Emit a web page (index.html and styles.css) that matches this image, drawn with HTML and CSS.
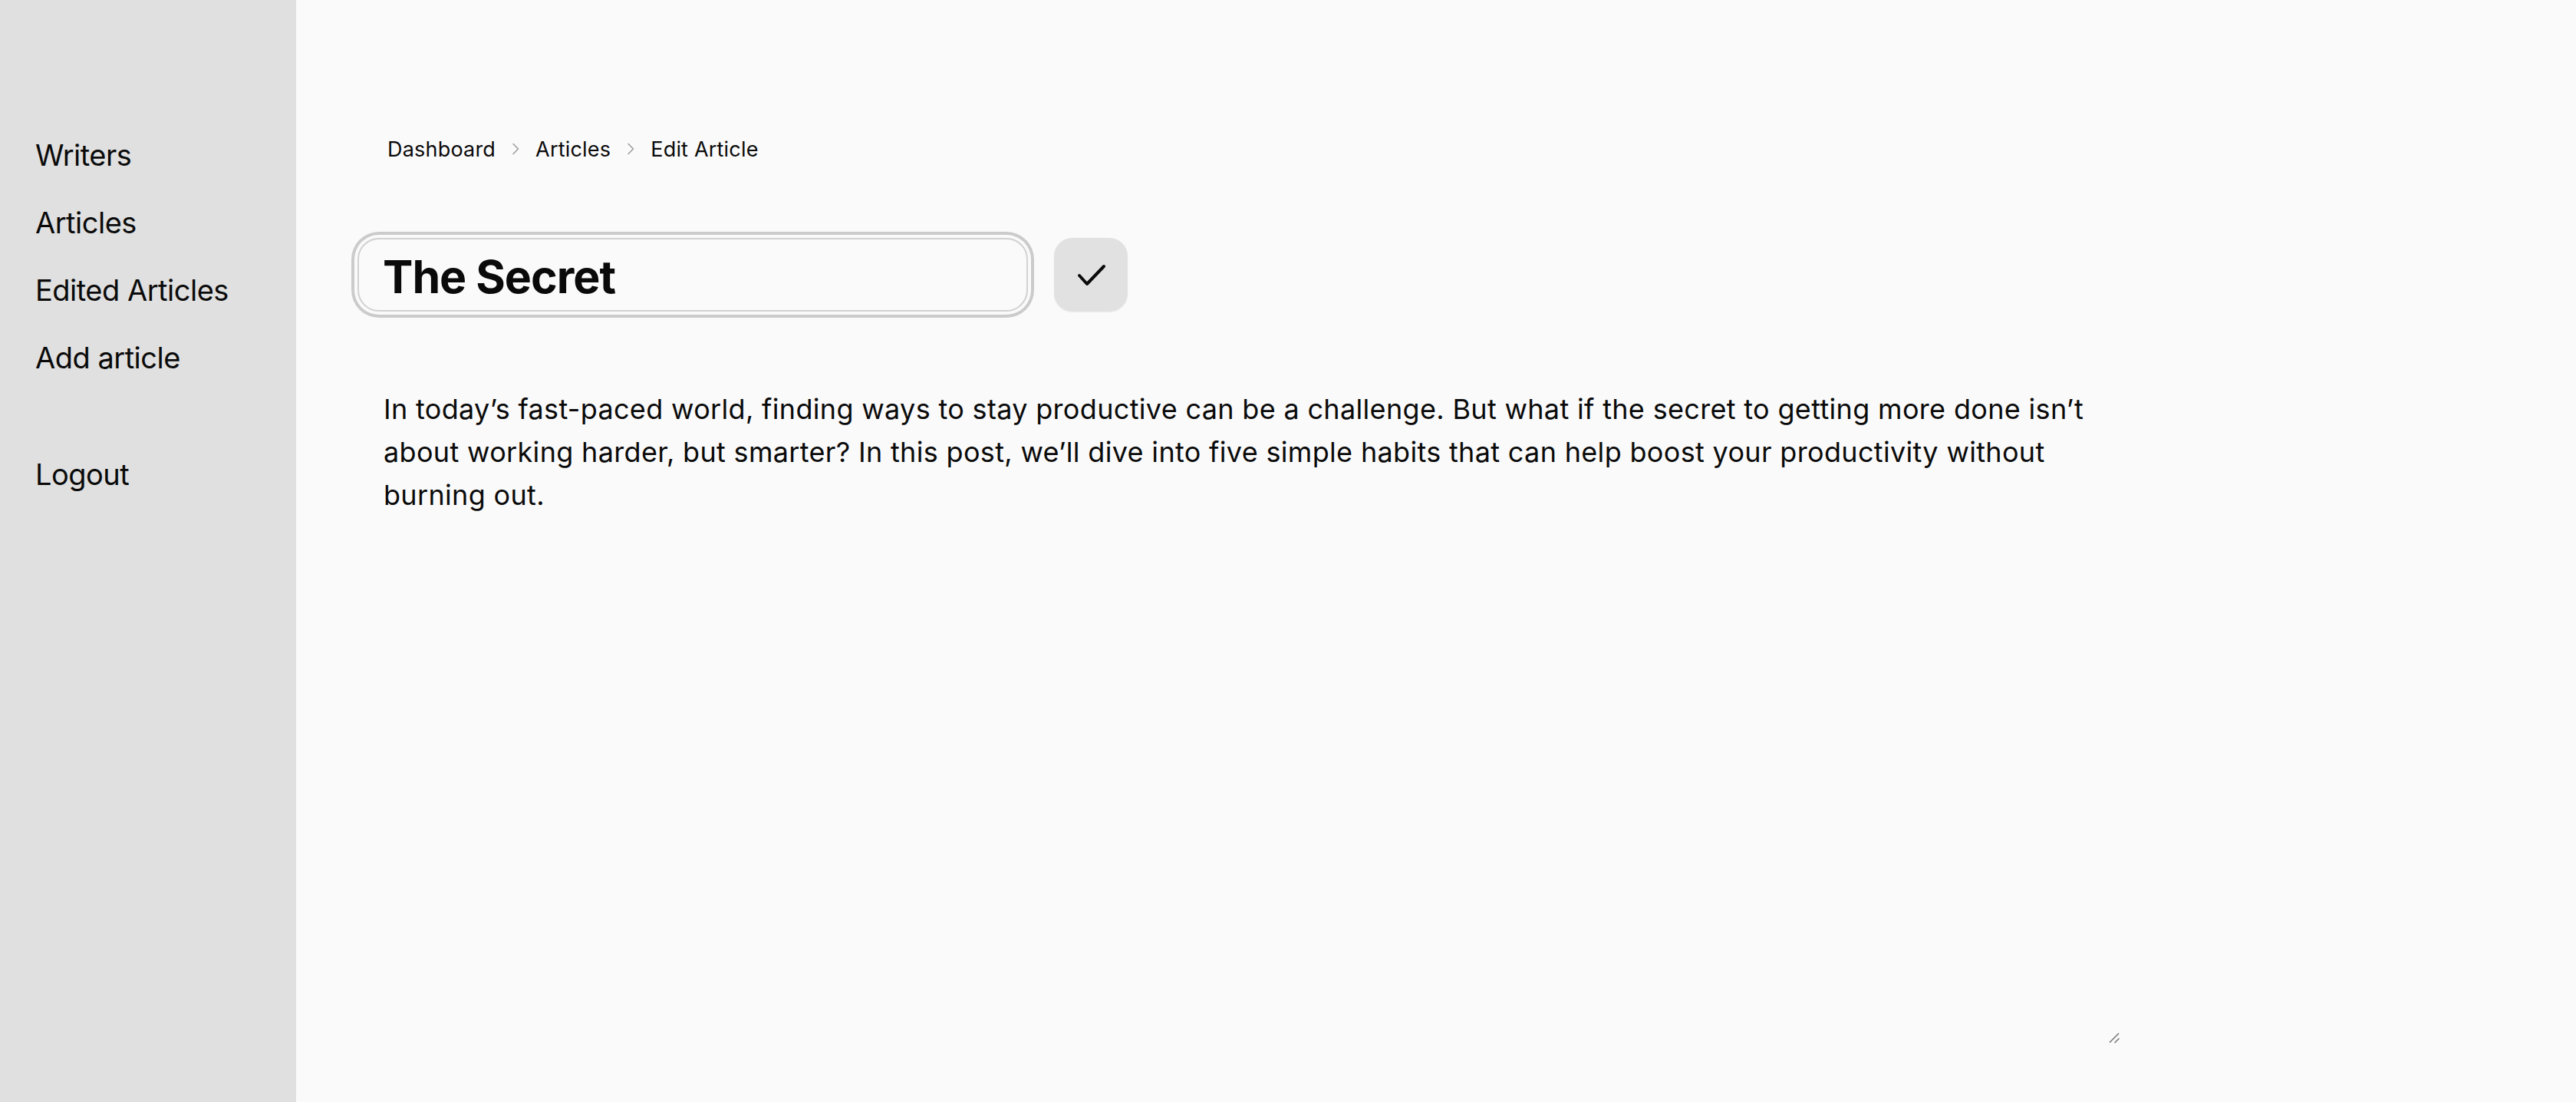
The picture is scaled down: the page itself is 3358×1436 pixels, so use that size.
FILE: index.html
```html
<!DOCTYPE html>
<html lang="en">
<head>
<meta charset="utf-8">
<title>Edit Article</title>
<link rel="stylesheet" href="styles.css">
</head>
<body>
<aside class="sidebar">
  <ul class="nav">
    <li><a href="#">Writers</a></li>
    <li><a href="#">Articles</a></li>
    <li><a href="#">Edited Articles</a></li>
    <li><a href="#">Add article</a></li>
  </ul>
  <ul class="nav nav-bottom">
    <li><a href="#">Logout</a></li>
  </ul>
</aside>
<main class="main">
  <div class="column">
    <nav class="breadcrumb">
      <a href="#">Dashboard</a>
      <svg class="chev" viewBox="0 0 24 24" width="28" height="28"><path d="M9.5 6.5 15 12l-5.5 5.5" fill="none" stroke="#9b9b9b" stroke-width="1.3" stroke-linecap="round" stroke-linejoin="round"/></svg>
      <a href="#">Articles</a>
      <svg class="chev" viewBox="0 0 24 24" width="28" height="28"><path d="M9.5 6.5 15 12l-5.5 5.5" fill="none" stroke="#9b9b9b" stroke-width="1.3" stroke-linecap="round" stroke-linejoin="round"/></svg>
      <span>Edit Article</span>
    </nav>
    <div class="title-row">
      <div class="title-input">The Secret</div>
      <button class="save-btn" type="button" aria-label="Save">
        <svg viewBox="0 0 24 24" width="48" height="48"><path d="M4.5 12.5l5 5.5L20.5 6.5" fill="none" stroke="#0a0a0a" stroke-width="2" stroke-linecap="round" stroke-linejoin="round"/></svg>
      </button>
    </div>
    <div class="body-input">
      <p class="body-text">In today’s fast-paced world, finding ways to stay productive can be a challenge. But what if the secret to getting more done isn’t about working harder, but smarter? In this post, we’ll dive into five simple habits that can help boost your productivity without burning out.</p>
      <svg class="grip" viewBox="0 0 16 16" width="16" height="16"><path d="M2 14.5 14 2.5M8.5 15 14.5 9" fill="none" stroke="#7a7a7a" stroke-width="1.6"/></svg>
    </div>
  </div>
</main>
</body>
</html>
```
FILE: styles.css
```css
* { box-sizing: border-box; }
html, body { margin: 0; padding: 0; height: 100%; }
body {
  display: flex;
  font-family: Inter, "Noto Sans", "Liberation Sans", sans-serif;
  color: #0a0a0a;
  background: #fafafa;
  overflow: hidden;
}
a { color: inherit; text-decoration: none; }

.sidebar {
  width: 386px;
  flex-shrink: 0;
  background: #e0e0e0;
  padding: 174px 0 0 46px;
}
.nav {
  list-style: none;
  margin: 0;
  padding: 0;
  display: flex;
  flex-direction: column;
  gap: 32px;
}
.nav li {
  font-size: 38px;
  line-height: 56px;
  letter-spacing: -0.5px;
}
.nav-bottom { margin-top: 96px; }

.main {
  flex: 1;
  background: #fafafa;
  padding: 174px 0 0 80px;
}
.column { width: 2298px; }

.breadcrumb {
  display: flex;
  align-items: center;
  gap: 12px;
  height: 40px;
  padding-left: 39px;
  font-size: 27px;
  letter-spacing: 0.2px;
}
.chev { flex-shrink: 0; }

.title-row {
  margin-top: 96px;
  display: flex;
  align-items: center;
  gap: 34px;
}
.title-input {
  width: 874px;
  height: 96px;
  border: 2px solid #d2d2d2;
  border-radius: 28px;
  box-shadow: 0 0 0 4px #fafafa, 0 0 0 8px #cbcbcb;
  display: flex;
  align-items: center;
  padding: 4px 0 0 31px;
  font-size: 59px;
  font-weight: 700;
  letter-spacing: -1px;
}
.save-btn {
  width: 96px;
  height: 96px;
  border: none;
  border-radius: 24px;
  background: #e1e1e1;
  box-shadow: 0 1px 2px rgba(0,0,0,0.06);
  display: flex;
  align-items: center;
  justify-content: center;
  padding: 0;
  cursor: pointer;
}

.body-input {
  position: relative;
  margin-top: 67px;
  height: 887px;
  padding: 32px 32px 0 34px;
}
.body-text {
  margin: 0;
  font-size: 36px;
  line-height: 56px;
  letter-spacing: 0.33px;
}
.grip {
  position: absolute;
  right: 0;
  bottom: 0;
}
```
